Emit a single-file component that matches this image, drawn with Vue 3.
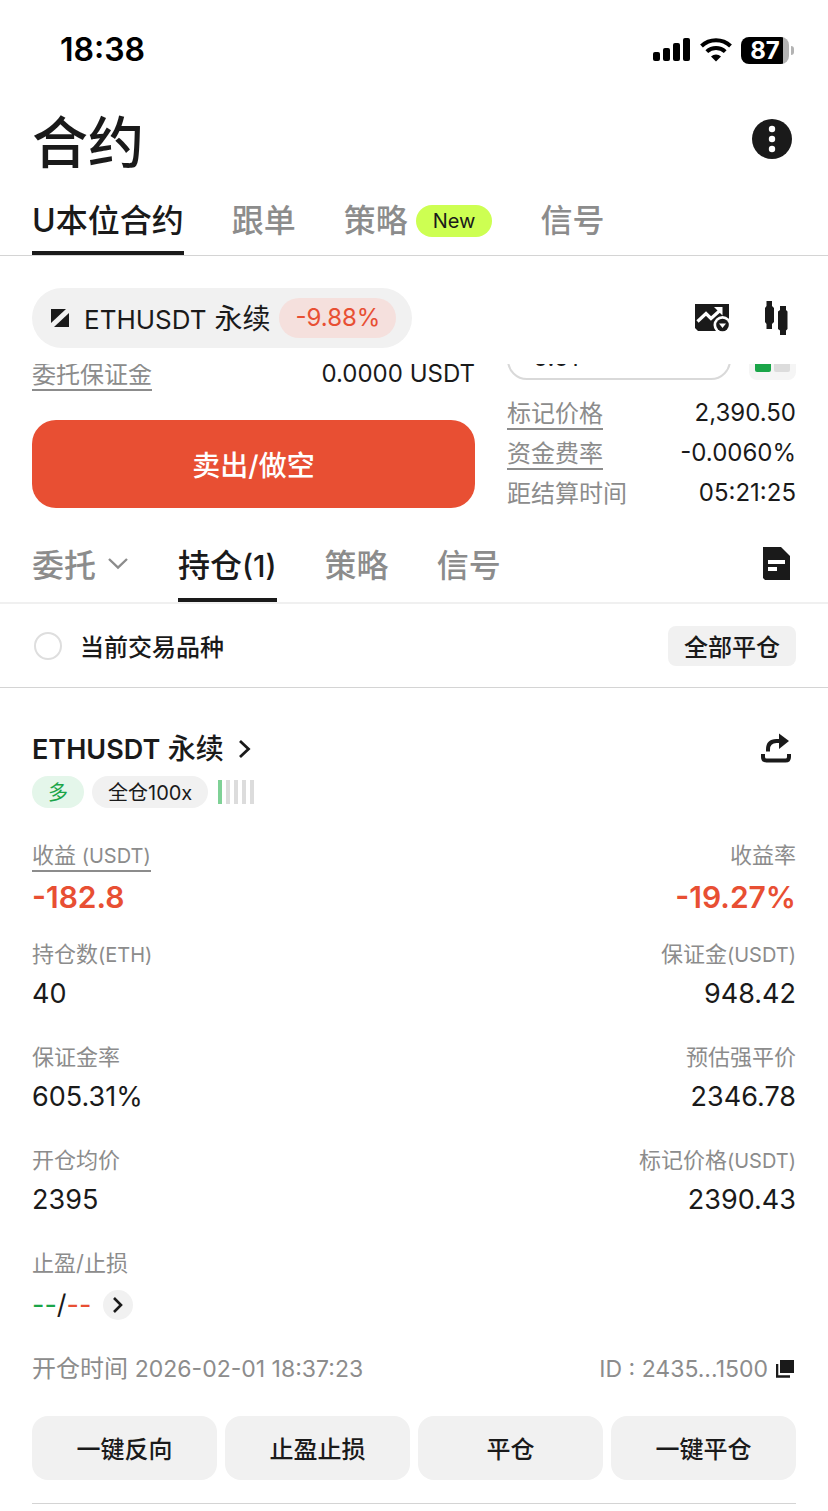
<template>
  <div class="page">
    <div class="status-bar">
      <span class="clock">18:38</span>
      <div class="status-icons">
        <svg width="38" height="24" viewBox="0 0 38 24">
          <rect x="0" y="14" width="7" height="9" rx="2" />
          <rect x="10" y="10" width="7" height="13" rx="2" />
          <rect x="20" y="5" width="7" height="18" rx="2" />
          <rect x="30" y="0" width="7" height="23" rx="2" />
        </svg>
        <svg width="32" height="24" viewBox="0 0 32 24">
          <g fill="none" stroke="#000" stroke-width="4">
            <path d="M1.500 8a21 21 0 0 1 29 0" />
            <path d="M6.800 13.600a13.500 13.500 0 0 1 18.400 0" />
          </g>
          <path d="M16 23.500l-5-5a7.500 7.500 0 0 1 10 0z" />
        </svg>
        <div class="battery">
          <span class="battery-level">87</span>
          <span class="battery-tip"></span>
        </div>
      </div>
    </div>

    <header class="header">
      <h1>合约</h1>
      <button class="icon-btn" aria-label="更多">
        <svg width="40" height="40" viewBox="0 0 40 40">
          <circle cx="20" cy="20" r="20" fill="#1a1a1a" />
          <g fill="#fff">
            <circle cx="20" cy="10" r="3.200" />
            <circle cx="20" cy="20" r="3.200" />
            <circle cx="20" cy="30" r="3.200" />
          </g>
        </svg>
      </button>
    </header>

    <nav class="tabs main-tabs">
      <button
        v-for="tab in mainTabs"
        :key="tab.name"
        class="tab"
        :class="{ active: tab.name === mainTab }"
        @click="mainTab = tab.name"
      >
        {{ tab.name }}
        <span v-if="tab.badge" class="badge">{{ tab.badge }}</span>
      </button>
    </nav>

    <div class="symbol-bar">
      <button class="symbol">
        <svg width="18" height="18" viewBox="0 0 18 18" fill="#1a1a1a">
          <path d="M0 0h15L0 14z" />
          <path d="M18 4v14H3z" />
        </svg>
        <span class="symbol-name"><span class="latin">ETHUSDT</span> 永续</span>
        <span class="change">-9.88%</span>
      </button>
      <div class="symbol-tools">
        <button class="icon-btn" aria-label="图表">
          <svg width="36" height="36" viewBox="0 0 36 36">
            <path d="M1 4h34v27H4l-3-3z" fill="#1a1a1a" />
            <path d="M3.500 21.500l8.500-8 5 5L26.500 10" fill="none" stroke="#fff" stroke-width="3.200" />
            <path d="M20 7h8.500v8.500z" fill="#fff" />
            <circle cx="28.500" cy="25" r="9" fill="#fff" />
            <circle cx="28.500" cy="25" r="6.300" fill="#1a1a1a" />
            <path d="M25 23.500h7L28.500 28z" fill="#fff" />
          </svg>
        </button>
        <button class="icon-btn" aria-label="K线">
          <svg width="40" height="36" viewBox="0 0 40 36" fill="#1a1a1a">
            <path d="M10.500 1H16v5l2 2v14l-2 2v5h-5.500v-5L9 22V8l1.500-2z" />
            <path d="M24 6h6v4l1.500 1.500V29L30 30.500V35h-6v-4.500L22 29V11.500L24 10z" />
          </svg>
        </button>
      </div>
    </div>

    <section class="order">
      <div class="order-left">
        <div class="pair">
          <span class="hint">委托保证金</span>
          <span>0.0000 USDT</span>
        </div>
        <button class="sell">卖出/做空</button>
      </div>
      <div class="order-right">
        <div class="depth">
          <input v-model="step" aria-label="精度" />
          <button class="depth-mode" aria-label="盘口"><i class="buy"></i><i></i></button>
        </div>
        <div v-for="item in marketInfo" :key="item.label" class="pair">
          <span :class="item.hint ? 'hint' : 'muted'">{{ item.label }}</span>
          <span>{{ item.value }}</span>
        </div>
      </div>
    </section>

    <nav class="tabs sub-tabs">
      <button
        v-for="tab in subTabs"
        :key="tab.name"
        class="tab"
        :class="{ active: tab.name === subTab }"
        @click="subTab = tab.name"
      >
        {{ tab.name }}<span v-if="tab.count" class="count">({{ tab.count }})</span>
        <svg v-if="tab.menu" width="20" height="14" viewBox="0 0 20 14">
          <path d="M1 2l9 8.500L19 2" fill="none" stroke="#8c8c8c" stroke-width="2.400" />
        </svg>
      </button>
      <button class="icon-btn history" aria-label="历史记录">
        <svg width="40" height="36" viewBox="0 0 40 36">
          <path d="M7 1h18l9 9v24H9l-2-2z" fill="#1a1a1a" />
          <path d="M12 14h17v4H12zM12 21h9v4h-9z" fill="#fff" />
        </svg>
      </button>
    </nav>

    <div class="filter">
      <label>
        <input v-model="onlyCurrent" type="checkbox" />
        <span>当前交易品种</span>
      </label>
      <button class="close-all">全部平仓</button>
    </div>

    <article class="position">
      <div class="position-head">
        <a href="#" class="position-title">
          <span><span class="latin">ETHUSDT</span> 永续</span>
          <svg width="14" height="20" viewBox="0 0 14 20">
            <path d="M2 2l8.500 8L2 18" fill="none" stroke="#1a1a1a" stroke-width="2.800" />
          </svg>
        </a>
        <button class="icon-btn" aria-label="分享">
          <svg width="40" height="36" viewBox="0 0 40 36">
            <path d="M12 20.500V18.500q0-8.500 8.500-8.500H25" fill="none" stroke="#1a1a1a" stroke-width="4" />
            <path d="M23 2.500l10 7.500-10 8z" fill="#1a1a1a" />
            <path d="M7 23v3q0 3.500 3.500 3.500h19q3.500 0 3.500-3.500v-3" fill="none" stroke="#1a1a1a" stroke-width="4" />
          </svg>
        </button>
      </div>

      <div class="tags">
        <span class="tag long">多</span>
        <span class="tag">全仓100x</span>
        <span class="risk">
          <i v-for="n in 5" :key="n" :class="{ on: n === 1 }"></i>
        </span>
      </div>

      <div
        v-for="row in stats"
        :key="row[0].label"
        class="stat-row"
        :class="{ profit: row[0].hint }"
      >
        <div v-for="stat in row" :key="stat.label" class="stat">
          <span class="stat-label" :class="{ underlined: stat.hint }">
            {{ stat.label }}<span class="unit">{{ stat.unit }}</span>
          </span>
          <span class="stat-value">{{ stat.value }}</span>
        </div>
      </div>

      <div class="stat">
        <span class="stat-label">止盈/止损</span>
        <div class="tpsl">
          <span><span class="green">--</span>/<span class="red">--</span></span>
          <button class="round" aria-label="设置止盈止损">
            <svg width="12" height="18" viewBox="0 0 12 18">
              <path d="M2 2l7 7-7 7" fill="none" stroke="#1a1a1a" stroke-width="2.600" />
            </svg>
          </button>
        </div>
      </div>

      <div class="meta">
        <span>开仓时间 <span class="meta-num">2026-02-01 18:37:23</span></span>
        <span class="order-id">
          <span class="meta-num">ID : 2435...1500</span>
          <button class="icon-btn" aria-label="复制">
            <svg width="20" height="20" viewBox="0 0 20 20">
              <path d="M4 1h14v13H4z" fill="#1a1a1a" />
              <path d="M1 5v12.500h13" fill="none" stroke="#1a1a1a" stroke-width="2.600" />
            </svg>
          </button>
        </span>
      </div>

      <div class="actions">
        <button v-for="action in actions" :key="action">{{ action }}</button>
      </div>
    </article>
  </div>
</template>

<script setup>
import { ref } from 'vue'

const mainTab = ref('U本位合约')
const subTab = ref('持仓')
const step = ref('0.01')
const onlyCurrent = ref(false)

const mainTabs = [
  { name: 'U本位合约' },
  { name: '跟单' },
  { name: '策略', badge: 'New' },
  { name: '信号' }
]

const subTabs = [
  { name: '委托', menu: true },
  { name: '持仓', count: 1 },
  { name: '策略' },
  { name: '信号' }
]

const marketInfo = [
  { label: '标记价格', value: '2,390.50', hint: true },
  { label: '资金费率', value: '-0.0060%', hint: true },
  { label: '距结算时间', value: '05:21:25' }
]

const stats = [
  [
    { label: '收益', unit: ' (USDT)', value: '-182.8', hint: true },
    { label: '收益率', value: '-19.27%' }
  ],
  [
    { label: '持仓数', unit: '(ETH)', value: '40' },
    { label: '保证金', unit: '(USDT)', value: '948.42' }
  ],
  [
    { label: '保证金率', value: '605.31%' },
    { label: '预估强平价', value: '2346.78' }
  ],
  [
    { label: '开仓均价', value: '2395' },
    { label: '标记价格', unit: '(USDT)', value: '2390.43' }
  ]
]

const actions = ['一键反向', '止盈止损', '平仓', '一键平仓']
</script>

<style>
body {
  background: #fff;
}
</style>

<style scoped>
.page {
  font-family: Inter, "Noto Sans CJK SC", sans-serif;
  font-size: 24px;
  line-height: 32px;
  color: #1a1a1a;
}

button,
input {
  box-sizing: border-box;
  font: inherit;
  color: inherit;
  background: none;
  border: none;
  padding: 0;
  margin: 0;
}

button {
  cursor: pointer;
}

svg {
  display: block;
  flex: none;
}

.icon-btn {
  flex: none;
}

.status-bar {
  display: flex;
  justify-content: space-between;
  align-items: center;
  height: 100px;
  padding: 0 34px 0 60px;
  color: #000;
}

.clock {
  font-size: 32px;
  font-weight: 600;
}

.status-icons {
  display: flex;
  align-items: center;
  gap: 9px;
}

.battery {
  display: flex;
  align-items: center;
  gap: 2px;
}

.battery-level {
  width: 48px;
  height: 27px;
  border-radius: 8px;
  background: linear-gradient(to right, #000 42px, #b3b3b3 42px);
  color: #fff;
  font-weight: 700;
  font-size: 24px;
  line-height: 27px;
  text-align: center;
}

.battery-tip {
  width: 3px;
  height: 9px;
  border-radius: 0 4px 4px 0;
  background: #b3b3b3;
}

.header {
  display: flex;
  justify-content: space-between;
  align-items: center;
  height: 78px;
  padding: 0 36px 0 32px;
}

h1 {
  margin: 0;
  padding-top: 8px;
  font-size: 56px;
  line-height: 70px;
  font-weight: 500;
}

.tabs {
  display: flex;
  align-items: stretch;
  gap: 48px;
  padding: 0 32px;
}

.tab {
  display: flex;
  align-items: center;
  gap: 8px;
  font-size: 32px;
  font-weight: 500;
  color: #8c8c8c;
  border-top: 12px solid transparent;
  border-bottom: 4px solid transparent;
}

.tab.active {
  color: #1a1a1a;
  border-bottom-color: #1a1a1a;
}

.main-tabs {
  height: 77px;
  border-bottom: 1px solid #d4d4d4;
}

.badge {
  padding: 0 17px;
  border-radius: 16px;
  background: #cdff52;
  color: #1a1a1a;
  font-size: 20px;
  font-weight: 400;
  line-height: 32px;
}

.symbol-bar {
  display: flex;
  justify-content: space-between;
  align-items: center;
  padding: 32px 32px 16px;
}

.symbol {
  display: flex;
  align-items: center;
  height: 60px;
  padding: 0 16px 0 19px;
  border-radius: 30px;
  background: #f1f1f1;
  font-size: 28px;
}

.symbol-name {
  margin: 0 9px 0 15px;
  padding-top: 2px;
}

.latin {
  font-size: 26px;
}

.change {
  padding: 0 16px;
  border-radius: 20px;
  background: #f5e0dd;
  color: #e84f33;
  font-size: 24px;
  line-height: 40px;
}

.symbol-tools {
  display: flex;
  align-items: center;
  gap: 26px;
}

/* the upper part of the form is scrolled under the symbol bar */
.order {
  display: flex;
  align-items: flex-end;
  gap: 32px;
  height: 149px;
  padding: 0 32px;
  overflow: hidden;
}

.order-left {
  flex: 443;
  padding-bottom: 5px;
}

.order-right {
  flex: 289;
  min-width: 0;
}

.pair {
  display: flex;
  justify-content: space-between;
  align-items: center;
  height: 40px;
}

.muted {
  color: #8c8c8c;
  padding-top: 2px;
}

.hint {
  padding-top: 4px;
  color: #8c8c8c;
  line-height: 28px;
  border-bottom: 2px solid #8c8c8c;
}

.sell {
  display: block;
  width: 100%;
  height: 88px;
  margin-top: 26px;
  padding-top: 4px;
  border-radius: 24px;
  background: #e84f33;
  color: #fff;
  font-size: 28px;
  font-weight: 500;
}

.depth {
  display: flex;
  align-items: flex-end;
  gap: 18px;
  margin-bottom: 13px;
}

.depth input {
  flex: 1;
  min-width: 0;
  height: 48px;
  padding: 2px 24px 0;
  border: 2px solid #d9d9d9;
  border-radius: 20px;
}

.depth-mode {
  display: flex;
  align-items: flex-end;
  gap: 3px;
  width: 47px;
  height: 48px;
  padding: 8px 6px;
  border-radius: 8px;
  background: #f5f5f5;
}

.depth-mode i {
  flex: 1;
  height: 30px;
  border-radius: 2px;
  background: #dcdcdc;
}

.depth-mode .buy {
  background: #1aa548;
}

.sub-tabs {
  height: 89px;
  border-bottom: 2px solid #f0f0f0;
}

.sub-tabs .tab {
  border-top-width: 20px;
  gap: 0;
}

.sub-tabs svg {
  margin: 0 2px 4px 12px;
}

.count {
  font-size: 30px;
}

.sub-tabs .history {
  margin-left: auto;
  padding-top: 12px;
}

.sub-tabs .history svg {
  margin: 0;
}

.filter {
  display: flex;
  justify-content: space-between;
  align-items: center;
  height: 83px;
  padding: 0 32px;
  border-bottom: 1px solid #d4d4d4;
  font-weight: 500;
}

.filter label {
  display: flex;
  align-items: center;
  gap: 18px;
}

.filter label span {
  padding-top: 4px;
}

.filter input {
  appearance: none;
  width: 28px;
  height: 28px;
  margin-left: 2px;
  border: 2px solid #dedede;
  border-radius: 50%;
}

.filter input:checked {
  background: #1a1a1a;
}

.close-all {
  height: 40px;
  padding: 4px 16px 0;
  border-radius: 8px;
  background: #f1f1f1;
}

.position {
  margin: 0 32px;
  padding: 41px 0 23px;
  border-bottom: 1px solid #d4d4d4;
}

.position-head {
  display: flex;
  justify-content: space-between;
  align-items: center;
  height: 40px;
}

.position-title {
  display: flex;
  align-items: center;
  gap: 14px;
  color: inherit;
  text-decoration: none;
  font-size: 28px;
  font-weight: 500;
}

.position-title .latin {
  font-size: 27px;
  font-weight: 600;
}

.tags {
  display: flex;
  align-items: center;
  gap: 8px;
  margin: 7px 0 32px;
}

.tag {
  padding: 2px 16px 0;
  border-radius: 16px;
  background: #f1f1f1;
  font-size: 20px;
  line-height: 30px;
}

.tag.long {
  background: #e4f6ea;
  color: #1aa548;
}

.risk {
  display: flex;
  gap: 4px;
  margin-left: 2px;
}

.risk i {
  width: 4px;
  height: 24px;
  background: #dcdcdc;
}

.risk .on {
  background: #7fd196;
}

.stat-row {
  display: flex;
  justify-content: space-between;
  margin-bottom: 30px;
}

.stat {
  display: flex;
  flex-direction: column;
  align-items: flex-start;
}

.stat + .stat {
  align-items: flex-end;
}

.stat-label {
  height: 30px;
  margin-bottom: 7px;
  color: #8c8c8c;
  font-size: 22px;
  line-height: 30px;
}

.stat-label.underlined {
  margin-bottom: 5px;
  border-bottom: 2px solid #8c8c8c;
}

.unit {
  font-size: 20px;
  white-space: pre;
}

.stat-value {
  font-size: 27px;
  line-height: 36px;
}

.profit {
  margin-bottom: 22px;
}

.profit .stat-value {
  color: #e84f33;
  font-size: 30px;
  font-weight: 600;
  line-height: 40px;
}

.tpsl {
  display: flex;
  align-items: center;
  gap: 12px;
  height: 40px;
  font-size: 27px;
}

.green {
  color: #1aa548;
}

.red {
  color: #e84f33;
}

.round {
  display: flex;
  align-items: center;
  justify-content: center;
  width: 30px;
  height: 30px;
  border-radius: 50%;
  background: #f1f1f1;
}

.meta {
  display: flex;
  justify-content: space-between;
  align-items: center;
  margin-top: 28px;
  color: #8c8c8c;
}

.meta-num {
  font-size: 23px;
}

.order-id {
  display: flex;
  align-items: center;
  gap: 8px;
}

.actions {
  display: grid;
  grid-template-columns: repeat(4, 1fr);
  gap: 8px;
  margin-top: 31px;
}

.actions button {
  height: 64px;
  padding-top: 4px;
  border-radius: 16px;
  background: #f1f1f1;
  font-weight: 500;
}
</style>
